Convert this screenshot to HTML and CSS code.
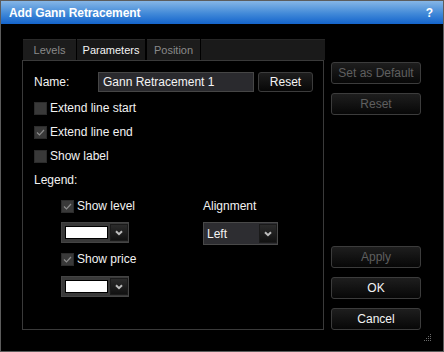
FILE: index.html
```html
<!DOCTYPE html>
<html>
<head>
<meta charset="utf-8">
<link rel="stylesheet" href="styles.css">
</head>
<body>
<div class="win">
  <div class="titlebar">
    <span class="title">Add Gann Retracement</span>
    <span class="help">?</span>
  </div>
  <div class="content">
    <div class="main">
      <div class="tabs">
        <div class="tab t-levels">Levels</div>
        <div class="tab t-params active">Parameters</div>
        <div class="tab t-pos">Position</div>
        <div class="tab-fill"></div>
      </div>
      <div class="panel">
        <div class="name-row">
          <span class="name-label">Name:</span>
          <div class="input">Gann Retracement 1</div>
          <div class="btn small">Reset</div>
        </div>
        <div class="rows">
          <div class="row"><span class="cb"></span><span>Extend line start</span></div>
          <div class="row"><span class="cb checked"><svg viewBox="0 0 11 11" width="11" height="11"><path d="M2 5.5 L4.5 8 L9 3" fill="none" stroke="#8c8c8c" stroke-width="1.2"/></svg></span><span>Extend line end</span></div>
          <div class="row"><span class="cb"></span><span>Show label</span></div>
          <div class="row"><span>Legend:</span></div>
        </div>
        <div class="legend">
          <div class="lcol">
            <div class="row"><span class="cb checked"><svg viewBox="0 0 11 11" width="11" height="11"><path d="M2 5.5 L4.5 8 L9 3" fill="none" stroke="#8c8c8c" stroke-width="1.2"/></svg></span><span>Show level</span></div>
            <div class="picker p1"><span class="swatch"></span><span class="arrow"><svg viewBox="0 0 8 6" width="8" height="6"><path d="M1 1.2 L4 4.2 L7 1.2" fill="none" stroke="#bdbdbd" stroke-width="2"/></svg></span></div>
            <div class="row r2"><span class="cb checked"><svg viewBox="0 0 11 11" width="11" height="11"><path d="M2 5.5 L4.5 8 L9 3" fill="none" stroke="#8c8c8c" stroke-width="1.2"/></svg></span><span>Show price</span></div>
            <div class="picker p2"><span class="swatch"></span><span class="arrow"><svg viewBox="0 0 8 6" width="8" height="6"><path d="M1 1.2 L4 4.2 L7 1.2" fill="none" stroke="#bdbdbd" stroke-width="2"/></svg></span></div>
          </div>
          <div class="rcol">
            <div class="row"><span>Alignment</span></div>
            <div class="select"><span class="sel-text">Left</span><span class="arrow"><svg viewBox="0 0 8 6" width="8" height="6"><path d="M1 1.2 L4 4.2 L7 1.2" fill="none" stroke="#bdbdbd" stroke-width="2"/></svg></span></div>
          </div>
        </div>
      </div>
    </div>
    <div class="side">
      <div class="group">
        <div class="btn disabled">Set as Default</div>
        <div class="btn disabled">Reset</div>
      </div>
      <div class="group">
        <div class="btn disabled">Apply</div>
        <div class="btn">OK</div>
        <div class="btn">Cancel</div>
      </div>
    </div>
  </div>
  <svg class="grip" width="8" height="8" viewBox="0 0 8 8">
    <g fill="#6a6a6a">
      <rect x="6" y="0" width="1" height="1"/>
      <rect x="4" y="2" width="1" height="1"/><rect x="6" y="2" width="1" height="1"/>
      <rect x="2" y="4" width="1" height="1"/><rect x="4" y="4" width="1" height="1"/><rect x="6" y="4" width="1" height="1"/>
      <rect x="0" y="6" width="1" height="1"/><rect x="2" y="6" width="1" height="1"/><rect x="4" y="6" width="1" height="1"/><rect x="6" y="6" width="1" height="1"/>
    </g>
  </svg>
</div>
</body>
</html>
```

FILE: styles.css
```css
* { box-sizing: border-box; }
html, body { margin: 0; padding: 0; background: #000; }
body {
  font-family: "Liberation Sans", Arial, sans-serif;
  font-size: 12px;
  color: #f2f2f2;
}
.win {
  position: relative;
  width: 444px;
  height: 352px;
  border: 1px solid #5c5c5c;
  background: #000;
}
.titlebar {
  height: 23px;
  display: flex;
  align-items: center;
  justify-content: space-between;
  padding: 0 10px 0 8px;
  background: linear-gradient(#86b6e6, #4189d8 55%, #1464cc);
  color: #fff;
  font-weight: bold;
  font-size: 12px;
}
.title { letter-spacing: -0.1px; }
.help { font-size: 12px; }
.content {
  display: flex;
  padding: 15px 0 0 21px;
}
.main {
  width: 302px;
  display: flex;
  flex-direction: column;
}
.tabs {
  display: flex;
  height: 21px;
  padding-left: 1px;
  gap: 1px;
}
.tab {
  text-align: center;
  font-size: 11px;
  color: #8a8a8a;
  background: #1c1c1c;
  border-top: 1px solid #2a2a2a;
  line-height: 20px;
}
.t-levels { width: 53px; }
.t-params { width: 68px; margin-right: 1px; }
.t-pos { width: 53px; }
.tab.active { color: #f4f4f4; background: #181818; }
.tab-fill { flex: 1; background: #1a1a1a; border-top: 1px solid #262626; margin-right: -1px; }
.panel {
  height: 270px;
  border: 1px solid #3a3a3a;
  padding: 11px 0 0 11px;
}
.name-row {
  display: flex;
  align-items: center;
  height: 20px;
}
.name-label { width: 64px; }
.input {
  width: 156px;
  height: 20px;
  line-height: 18px;
  padding-left: 4px;
  background: #2a2a2e;
  border: 1px solid #464646;
  color: #f4f4f4;
}
.btn {
  height: 22px;
  display: flex;
  align-items: center;
  justify-content: center;
  border: 1px solid #3c3c3c;
  border-radius: 3px;
  background: linear-gradient(#1e1e1e, #070707);
  color: #f4f4f4;
}
.btn.small { width: 55px; height: 20px; margin-left: 4px; }
.btn.disabled { color: #5f5f5f; }
.rows { margin-top: 4px; }
.row {
  height: 24px;
  display: flex;
  align-items: center;
}
.cb {
  width: 13px;
  height: 13px;
  margin-right: 3px;
  background: #393939;
  border: 1px solid #2c2c2c;
  display: flex;
  align-items: center;
  justify-content: center;
}
.legend {
  display: flex;
  margin-top: 2px;
  padding-left: 27px;
}
.lcol { width: 142px; }
.picker {
  width: 68px;
  height: 21px;
  display: flex;
  align-items: center;
  padding-left: 3px;
  background: #393939;
  border: 1px solid #444;
}
.p1 { margin-top: 4px; }
.r2 { margin-top: 4px; }
.p2 { margin-top: 5px; }
.swatch {
  width: 43px;
  height: 13px;
  background: #fff;
  border: 1px solid #000;
}
.arrow {
  width: 18px;
  height: 17px;
  margin-left: 2px;
  display: flex;
  align-items: center;
  justify-content: center;
  background: linear-gradient(#2b2b2b, #111);
  border: 1px solid #1a1a1a;
}
.select {
  margin-top: 4px;
  width: 75px;
  height: 23px;
  display: flex;
  align-items: center;
  background: #2d2d31;
  border: 1px solid #494949;
}
.sel-text { width: 53px; padding-left: 3px; }
.select .arrow { height: 19px; margin-left: 2px; }
.side {
  width: 90px;
  margin-left: 7px;
  display: flex;
  flex-direction: column;
  justify-content: space-between;
  padding-top: 23px;
}
.group { display: flex; flex-direction: column; gap: 9px; }
.grip { position: absolute; right: 11px; bottom: 9px; }
```
